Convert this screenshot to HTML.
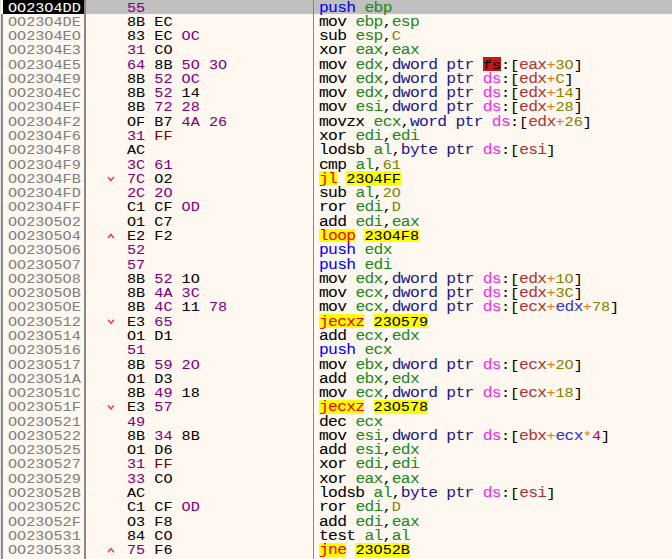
<!DOCTYPE html>
<html><head><meta charset="utf-8"><style>
html,body{margin:0;padding:0;width:672px;height:559px;overflow:hidden;background:#FFF8F0}
.t{position:absolute;white-space:pre;font-family:"Liberation Mono",monospace;font-size:13.0px;line-height:14.280px;transform:scaleX(1.1654);transform-origin:0 0;color:#000;-webkit-text-stroke:0.05px currentColor}
.hl{position:absolute;height:13.8px}
.lc{font-size:14.0px;line-height:0;letter-spacing:-0.600px}
</style></head><body>
<div style="position:absolute;left:0;top:0;width:672px;height:559px;background:#FFF8F0"></div>
<div style="position:absolute;left:2.5px;top:0;width:82px;height:14.28px;background:#000"></div>
<div style="position:absolute;left:86px;top:0;width:586px;height:14.28px;background:#C0C0C0"></div>
<div style="position:absolute;left:0;top:0;width:1.2px;height:559px;background:#E4E4E4"></div>
<div style="position:absolute;left:1.2px;top:14.28px;width:1.4px;height:559px;background:#8C8C8C"></div>
<div style="position:absolute;left:84.2px;top:0;width:1.5px;height:559px;background:#888"></div>
<div style="position:absolute;left:312.8px;top:0;width:1.7px;height:559px;background:#888"></div>
<div class="t" style="left:7.5px;top:1.50px;color:#FFF">OO23O4DD</div>
<div class="t" style="left:126.7px;top:1.50px"><span style="color:#800080">55</span></div>
<div class="t" style="left:319.0px;top:1.50px"><span style="color:#0000FF"><span class="lc">push</span></span> <span style="color:#1F881F"><span class="lc">ebp</span></span></div>
<div class="t" style="left:7.5px;top:15.78px;color:#808080">OO23O4DE</div>
<div class="t" style="left:126.7px;top:15.78px"><span style="color:#000000">8B</span> <span style="color:#000000">EC</span></div>
<div class="t" style="left:319.0px;top:15.78px"><span style="color:#000"><span class="lc">mov</span></span> <span style="color:#1F881F"><span class="lc">ebp</span></span><span style="color:#000">,</span><span style="color:#1F881F"><span class="lc">esp</span></span></div>
<div class="t" style="left:7.5px;top:30.06px;color:#808080">OO23O4EO</div>
<div class="t" style="left:126.7px;top:30.06px"><span style="color:#000000">83</span> <span style="color:#000000">EC</span> <span style="color:#800080">OC</span></div>
<div class="t" style="left:319.0px;top:30.06px"><span style="color:#000"><span class="lc">sub</span></span> <span style="color:#1F881F"><span class="lc">esp</span></span><span style="color:#000">,</span><span style="color:#828200">C</span></div>
<div class="t" style="left:7.5px;top:44.34px;color:#808080">OO23O4E3</div>
<div class="t" style="left:126.7px;top:44.34px"><span style="color:#800080">31</span> <span style="color:#000000">CO</span></div>
<div class="t" style="left:319.0px;top:44.34px"><span style="color:#000"><span class="lc">xor</span></span> <span style="color:#1F881F"><span class="lc">eax</span></span><span style="color:#000">,</span><span style="color:#1F881F"><span class="lc">eax</span></span></div>
<div class="t" style="left:7.5px;top:58.62px;color:#808080">OO23O4E5</div>
<div class="t" style="left:126.7px;top:58.62px"><span style="color:#800080">64</span> <span style="color:#000000">8B</span> <span style="color:#800080">5O</span> <span style="color:#800080">3O</span></div>
<div class="hl" style="left:482.62px;top:57.22px;width:18.18px;background:#C81414"></div>
<div class="t" style="left:319.0px;top:58.62px"><span style="color:#000"><span class="lc">mov</span></span> <span style="color:#1F881F"><span class="lc">edx</span></span><span style="color:#000">,</span><span style="color:#1A1A8C"><span class="lc">dword</span> <span class="lc">ptr</span></span> <span style="color:#000">fs</span><span style="color:#000">:</span><span style="color:#000">[</span><span style="color:#B03434"><span class="lc">eax</span></span><span style="color:#F27711">+</span><span style="color:#828200">3O</span><span style="color:#000">]</span></div>
<div class="t" style="left:7.5px;top:72.90px;color:#808080">OO23O4E9</div>
<div class="t" style="left:126.7px;top:72.90px"><span style="color:#000000">8B</span> <span style="color:#800080">52</span> <span style="color:#800080">OC</span></div>
<div class="t" style="left:319.0px;top:72.90px"><span style="color:#000"><span class="lc">mov</span></span> <span style="color:#1F881F"><span class="lc">edx</span></span><span style="color:#000">,</span><span style="color:#1A1A8C"><span class="lc">dword</span> <span class="lc">ptr</span></span> <span style="color:#F22CF2"><span class="lc">ds</span></span><span style="color:#000">:</span><span style="color:#000">[</span><span style="color:#B03434"><span class="lc">edx</span></span><span style="color:#F27711">+</span><span style="color:#828200">C</span><span style="color:#000">]</span></div>
<div class="t" style="left:7.5px;top:87.18px;color:#808080">OO23O4EC</div>
<div class="t" style="left:126.7px;top:87.18px"><span style="color:#000000">8B</span> <span style="color:#800080">52</span> <span style="color:#000000">14</span></div>
<div class="t" style="left:319.0px;top:87.18px"><span style="color:#000"><span class="lc">mov</span></span> <span style="color:#1F881F"><span class="lc">edx</span></span><span style="color:#000">,</span><span style="color:#1A1A8C"><span class="lc">dword</span> <span class="lc">ptr</span></span> <span style="color:#F22CF2"><span class="lc">ds</span></span><span style="color:#000">:</span><span style="color:#000">[</span><span style="color:#B03434"><span class="lc">edx</span></span><span style="color:#F27711">+</span><span style="color:#828200">14</span><span style="color:#000">]</span></div>
<div class="t" style="left:7.5px;top:101.46px;color:#808080">OO23O4EF</div>
<div class="t" style="left:126.7px;top:101.46px"><span style="color:#000000">8B</span> <span style="color:#800080">72</span> <span style="color:#800080">28</span></div>
<div class="t" style="left:319.0px;top:101.46px"><span style="color:#000"><span class="lc">mov</span></span> <span style="color:#1F881F"><span class="lc">esi</span></span><span style="color:#000">,</span><span style="color:#1A1A8C"><span class="lc">dword</span> <span class="lc">ptr</span></span> <span style="color:#F22CF2"><span class="lc">ds</span></span><span style="color:#000">:</span><span style="color:#000">[</span><span style="color:#B03434"><span class="lc">edx</span></span><span style="color:#F27711">+</span><span style="color:#828200">28</span><span style="color:#000">]</span></div>
<div class="t" style="left:7.5px;top:115.74px;color:#808080">OO23O4F2</div>
<div class="t" style="left:126.7px;top:115.74px"><span style="color:#000000">OF</span> <span style="color:#000000">B7</span> <span style="color:#800080">4A</span> <span style="color:#800080">26</span></div>
<div class="t" style="left:319.0px;top:115.74px"><span style="color:#000"><span class="lc">movzx</span></span> <span style="color:#1F881F"><span class="lc">ecx</span></span><span style="color:#000">,</span><span style="color:#1A1A8C"><span class="lc">word</span> <span class="lc">ptr</span></span> <span style="color:#F22CF2"><span class="lc">ds</span></span><span style="color:#000">:</span><span style="color:#000">[</span><span style="color:#B03434"><span class="lc">edx</span></span><span style="color:#F27711">+</span><span style="color:#828200">26</span><span style="color:#000">]</span></div>
<div class="t" style="left:7.5px;top:130.02px;color:#808080">OO23O4F6</div>
<div class="t" style="left:126.7px;top:130.02px"><span style="color:#800080">31</span> <span style="color:#800000">FF</span></div>
<div class="t" style="left:319.0px;top:130.02px"><span style="color:#000"><span class="lc">xor</span></span> <span style="color:#1F881F"><span class="lc">edi</span></span><span style="color:#000">,</span><span style="color:#1F881F"><span class="lc">edi</span></span></div>
<div class="t" style="left:7.5px;top:144.30px;color:#808080">OO23O4F8</div>
<div class="t" style="left:126.7px;top:144.30px"><span style="color:#000000">AC</span></div>
<div class="t" style="left:319.0px;top:144.30px"><span style="color:#000"><span class="lc">lodsb</span></span> <span style="color:#1F881F"><span class="lc">al</span></span><span style="color:#000">,</span><span style="color:#1A1A8C"><span class="lc">byte</span> <span class="lc">ptr</span></span> <span style="color:#F22CF2"><span class="lc">ds</span></span><span style="color:#000">:</span><span style="color:#000">[</span><span style="color:#B03434"><span class="lc">esi</span></span><span style="color:#000">]</span></div>
<div class="t" style="left:7.5px;top:158.58px;color:#808080">OO23O4F9</div>
<div class="t" style="left:126.7px;top:158.58px"><span style="color:#800080">3C</span> <span style="color:#800080">61</span></div>
<div class="t" style="left:319.0px;top:158.58px"><span style="color:#000"><span class="lc">cmp</span></span> <span style="color:#1F881F"><span class="lc">al</span></span><span style="color:#000">,</span><span style="color:#828200">61</span></div>
<div class="t" style="left:7.5px;top:172.86px;color:#808080">OO23O4FB</div>
<svg style="position:absolute;left:0;top:0" width="672" height="559"><polyline points="108,176.90 110.9,180.50 113.8,176.90" fill="none" stroke="#F03C3C" stroke-width="1.5"/></svg>
<div class="t" style="left:126.7px;top:172.86px"><span style="color:#800080">7C</span> <span style="color:#000000">O2</span></div>
<div class="hl" style="left:319.00px;top:171.46px;width:18.18px;background:#FFFF00"></div>
<div class="hl" style="left:346.27px;top:171.46px;width:54.54px;background:#FFFF00"></div>
<div class="t" style="left:319.0px;top:172.86px"><span style="color:#FF0000"><span class="lc">jl</span></span> <span style="color:#000">23O4FF</span></div>
<div class="t" style="left:7.5px;top:187.14px;color:#808080">OO23O4FD</div>
<div class="t" style="left:126.7px;top:187.14px"><span style="color:#800080">2C</span> <span style="color:#800080">2O</span></div>
<div class="t" style="left:319.0px;top:187.14px"><span style="color:#000"><span class="lc">sub</span></span> <span style="color:#1F881F"><span class="lc">al</span></span><span style="color:#000">,</span><span style="color:#828200">2O</span></div>
<div class="t" style="left:7.5px;top:201.42px;color:#808080">OO23O4FF</div>
<div class="t" style="left:126.7px;top:201.42px"><span style="color:#000000">C1</span> <span style="color:#000000">CF</span> <span style="color:#800080">OD</span></div>
<div class="t" style="left:319.0px;top:201.42px"><span style="color:#000"><span class="lc">ror</span></span> <span style="color:#1F881F"><span class="lc">edi</span></span><span style="color:#000">,</span><span style="color:#828200">D</span></div>
<div class="t" style="left:7.5px;top:215.70px;color:#808080">OO23O5O2</div>
<div class="t" style="left:126.7px;top:215.70px"><span style="color:#000000">O1</span> <span style="color:#000000">C7</span></div>
<div class="t" style="left:319.0px;top:215.70px"><span style="color:#000"><span class="lc">add</span></span> <span style="color:#1F881F"><span class="lc">edi</span></span><span style="color:#000">,</span><span style="color:#1F881F"><span class="lc">eax</span></span></div>
<div class="t" style="left:7.5px;top:229.98px;color:#808080">OO23O5O4</div>
<svg style="position:absolute;left:0;top:0" width="672" height="559"><polyline points="108,238.02 110.9,234.42 113.8,238.02" fill="none" stroke="#F03C3C" stroke-width="1.5"/></svg>
<div class="t" style="left:126.7px;top:229.98px"><span style="color:#000000">E2</span> <span style="color:#000000">F2</span></div>
<div class="hl" style="left:319.00px;top:228.58px;width:36.36px;background:#FFFF00"></div>
<div class="hl" style="left:364.45px;top:228.58px;width:54.54px;background:#FFFF00"></div>
<div class="t" style="left:319.0px;top:229.98px"><span style="color:#FF0000"><span class="lc">loop</span></span> <span style="color:#000">23O4F8</span></div>
<div class="t" style="left:7.5px;top:244.26px;color:#808080">OO23O5O6</div>
<div class="t" style="left:126.7px;top:244.26px"><span style="color:#800080">52</span></div>
<div class="t" style="left:319.0px;top:244.26px"><span style="color:#0000FF"><span class="lc">push</span></span> <span style="color:#1F881F"><span class="lc">edx</span></span></div>
<div class="t" style="left:7.5px;top:258.54px;color:#808080">OO23O5O7</div>
<div class="t" style="left:126.7px;top:258.54px"><span style="color:#800080">57</span></div>
<div class="t" style="left:319.0px;top:258.54px"><span style="color:#0000FF"><span class="lc">push</span></span> <span style="color:#1F881F"><span class="lc">edi</span></span></div>
<div class="t" style="left:7.5px;top:272.82px;color:#808080">OO23O5O8</div>
<div class="t" style="left:126.7px;top:272.82px"><span style="color:#000000">8B</span> <span style="color:#800080">52</span> <span style="color:#000000">1O</span></div>
<div class="t" style="left:319.0px;top:272.82px"><span style="color:#000"><span class="lc">mov</span></span> <span style="color:#1F881F"><span class="lc">edx</span></span><span style="color:#000">,</span><span style="color:#1A1A8C"><span class="lc">dword</span> <span class="lc">ptr</span></span> <span style="color:#F22CF2"><span class="lc">ds</span></span><span style="color:#000">:</span><span style="color:#000">[</span><span style="color:#B03434"><span class="lc">edx</span></span><span style="color:#F27711">+</span><span style="color:#828200">1O</span><span style="color:#000">]</span></div>
<div class="t" style="left:7.5px;top:287.10px;color:#808080">OO23O5OB</div>
<div class="t" style="left:126.7px;top:287.10px"><span style="color:#000000">8B</span> <span style="color:#800080">4A</span> <span style="color:#800080">3C</span></div>
<div class="t" style="left:319.0px;top:287.10px"><span style="color:#000"><span class="lc">mov</span></span> <span style="color:#1F881F"><span class="lc">ecx</span></span><span style="color:#000">,</span><span style="color:#1A1A8C"><span class="lc">dword</span> <span class="lc">ptr</span></span> <span style="color:#F22CF2"><span class="lc">ds</span></span><span style="color:#000">:</span><span style="color:#000">[</span><span style="color:#B03434"><span class="lc">edx</span></span><span style="color:#F27711">+</span><span style="color:#828200">3C</span><span style="color:#000">]</span></div>
<div class="t" style="left:7.5px;top:301.38px;color:#808080">OO23O5OE</div>
<div class="t" style="left:126.7px;top:301.38px"><span style="color:#000000">8B</span> <span style="color:#800080">4C</span> <span style="color:#000000">11</span> <span style="color:#800080">78</span></div>
<div class="t" style="left:319.0px;top:301.38px"><span style="color:#000"><span class="lc">mov</span></span> <span style="color:#1F881F"><span class="lc">ecx</span></span><span style="color:#000">,</span><span style="color:#1A1A8C"><span class="lc">dword</span> <span class="lc">ptr</span></span> <span style="color:#F22CF2"><span class="lc">ds</span></span><span style="color:#000">:</span><span style="color:#000">[</span><span style="color:#B03434"><span class="lc">ecx</span></span><span style="color:#F27711">+</span><span style="color:#3838BC"><span class="lc">edx</span></span><span style="color:#F27711">+</span><span style="color:#828200">78</span><span style="color:#000">]</span></div>
<div class="t" style="left:7.5px;top:315.66px;color:#808080">OO23O512</div>
<svg style="position:absolute;left:0;top:0" width="672" height="559"><polyline points="108,319.70 110.9,323.30 113.8,319.70" fill="none" stroke="#F03C3C" stroke-width="1.5"/></svg>
<div class="t" style="left:126.7px;top:315.66px"><span style="color:#000000">E3</span> <span style="color:#800080">65</span></div>
<div class="hl" style="left:319.00px;top:314.26px;width:45.45px;background:#FFFF00"></div>
<div class="hl" style="left:373.54px;top:314.26px;width:54.54px;background:#FFFF00"></div>
<div class="t" style="left:319.0px;top:315.66px"><span style="color:#FF0000"><span class="lc">jecxz</span></span> <span style="color:#000">23O579</span></div>
<div class="t" style="left:7.5px;top:329.94px;color:#808080">OO23O514</div>
<div class="t" style="left:126.7px;top:329.94px"><span style="color:#000000">O1</span> <span style="color:#000000">D1</span></div>
<div class="t" style="left:319.0px;top:329.94px"><span style="color:#000"><span class="lc">add</span></span> <span style="color:#1F881F"><span class="lc">ecx</span></span><span style="color:#000">,</span><span style="color:#1F881F"><span class="lc">edx</span></span></div>
<div class="t" style="left:7.5px;top:344.22px;color:#808080">OO23O516</div>
<div class="t" style="left:126.7px;top:344.22px"><span style="color:#800080">51</span></div>
<div class="t" style="left:319.0px;top:344.22px"><span style="color:#0000FF"><span class="lc">push</span></span> <span style="color:#1F881F"><span class="lc">ecx</span></span></div>
<div class="t" style="left:7.5px;top:358.50px;color:#808080">OO23O517</div>
<div class="t" style="left:126.7px;top:358.50px"><span style="color:#000000">8B</span> <span style="color:#800080">59</span> <span style="color:#800080">2O</span></div>
<div class="t" style="left:319.0px;top:358.50px"><span style="color:#000"><span class="lc">mov</span></span> <span style="color:#1F881F"><span class="lc">ebx</span></span><span style="color:#000">,</span><span style="color:#1A1A8C"><span class="lc">dword</span> <span class="lc">ptr</span></span> <span style="color:#F22CF2"><span class="lc">ds</span></span><span style="color:#000">:</span><span style="color:#000">[</span><span style="color:#B03434"><span class="lc">ecx</span></span><span style="color:#F27711">+</span><span style="color:#828200">2O</span><span style="color:#000">]</span></div>
<div class="t" style="left:7.5px;top:372.78px;color:#808080">OO23O51A</div>
<div class="t" style="left:126.7px;top:372.78px"><span style="color:#000000">O1</span> <span style="color:#000000">D3</span></div>
<div class="t" style="left:319.0px;top:372.78px"><span style="color:#000"><span class="lc">add</span></span> <span style="color:#1F881F"><span class="lc">ebx</span></span><span style="color:#000">,</span><span style="color:#1F881F"><span class="lc">edx</span></span></div>
<div class="t" style="left:7.5px;top:387.06px;color:#808080">OO23O51C</div>
<div class="t" style="left:126.7px;top:387.06px"><span style="color:#000000">8B</span> <span style="color:#800080">49</span> <span style="color:#000000">18</span></div>
<div class="t" style="left:319.0px;top:387.06px"><span style="color:#000"><span class="lc">mov</span></span> <span style="color:#1F881F"><span class="lc">ecx</span></span><span style="color:#000">,</span><span style="color:#1A1A8C"><span class="lc">dword</span> <span class="lc">ptr</span></span> <span style="color:#F22CF2"><span class="lc">ds</span></span><span style="color:#000">:</span><span style="color:#000">[</span><span style="color:#B03434"><span class="lc">ecx</span></span><span style="color:#F27711">+</span><span style="color:#828200">18</span><span style="color:#000">]</span></div>
<div class="t" style="left:7.5px;top:401.34px;color:#808080">OO23O51F</div>
<svg style="position:absolute;left:0;top:0" width="672" height="559"><polyline points="108,405.38 110.9,408.98 113.8,405.38" fill="none" stroke="#F03C3C" stroke-width="1.5"/></svg>
<div class="t" style="left:126.7px;top:401.34px"><span style="color:#000000">E3</span> <span style="color:#800080">57</span></div>
<div class="hl" style="left:319.00px;top:399.94px;width:45.45px;background:#FFFF00"></div>
<div class="hl" style="left:373.54px;top:399.94px;width:54.54px;background:#FFFF00"></div>
<div class="t" style="left:319.0px;top:401.34px"><span style="color:#FF0000"><span class="lc">jecxz</span></span> <span style="color:#000">23O578</span></div>
<div class="t" style="left:7.5px;top:415.62px;color:#808080">OO23O521</div>
<div class="t" style="left:126.7px;top:415.62px"><span style="color:#800080">49</span></div>
<div class="t" style="left:319.0px;top:415.62px"><span style="color:#000"><span class="lc">dec</span></span> <span style="color:#1F881F"><span class="lc">ecx</span></span></div>
<div class="t" style="left:7.5px;top:429.90px;color:#808080">OO23O522</div>
<div class="t" style="left:126.7px;top:429.90px"><span style="color:#000000">8B</span> <span style="color:#800080">34</span> <span style="color:#000000">8B</span></div>
<div class="t" style="left:319.0px;top:429.90px"><span style="color:#000"><span class="lc">mov</span></span> <span style="color:#1F881F"><span class="lc">esi</span></span><span style="color:#000">,</span><span style="color:#1A1A8C"><span class="lc">dword</span> <span class="lc">ptr</span></span> <span style="color:#F22CF2"><span class="lc">ds</span></span><span style="color:#000">:</span><span style="color:#000">[</span><span style="color:#B03434"><span class="lc">ebx</span></span><span style="color:#F27711">+</span><span style="color:#3838BC"><span class="lc">ecx</span></span><span style="color:#F27711">*</span><span style="color:#B30059">4</span><span style="color:#000">]</span></div>
<div class="t" style="left:7.5px;top:444.18px;color:#808080">OO23O525</div>
<div class="t" style="left:126.7px;top:444.18px"><span style="color:#000000">O1</span> <span style="color:#000000">D6</span></div>
<div class="t" style="left:319.0px;top:444.18px"><span style="color:#000"><span class="lc">add</span></span> <span style="color:#1F881F"><span class="lc">esi</span></span><span style="color:#000">,</span><span style="color:#1F881F"><span class="lc">edx</span></span></div>
<div class="t" style="left:7.5px;top:458.46px;color:#808080">OO23O527</div>
<div class="t" style="left:126.7px;top:458.46px"><span style="color:#800080">31</span> <span style="color:#800000">FF</span></div>
<div class="t" style="left:319.0px;top:458.46px"><span style="color:#000"><span class="lc">xor</span></span> <span style="color:#1F881F"><span class="lc">edi</span></span><span style="color:#000">,</span><span style="color:#1F881F"><span class="lc">edi</span></span></div>
<div class="t" style="left:7.5px;top:472.74px;color:#808080">OO23O529</div>
<div class="t" style="left:126.7px;top:472.74px"><span style="color:#800080">33</span> <span style="color:#000000">CO</span></div>
<div class="t" style="left:319.0px;top:472.74px"><span style="color:#000"><span class="lc">xor</span></span> <span style="color:#1F881F"><span class="lc">eax</span></span><span style="color:#000">,</span><span style="color:#1F881F"><span class="lc">eax</span></span></div>
<div class="t" style="left:7.5px;top:487.02px;color:#808080">OO23O52B</div>
<div class="t" style="left:126.7px;top:487.02px"><span style="color:#000000">AC</span></div>
<div class="t" style="left:319.0px;top:487.02px"><span style="color:#000"><span class="lc">lodsb</span></span> <span style="color:#1F881F"><span class="lc">al</span></span><span style="color:#000">,</span><span style="color:#1A1A8C"><span class="lc">byte</span> <span class="lc">ptr</span></span> <span style="color:#F22CF2"><span class="lc">ds</span></span><span style="color:#000">:</span><span style="color:#000">[</span><span style="color:#B03434"><span class="lc">esi</span></span><span style="color:#000">]</span></div>
<div class="t" style="left:7.5px;top:501.30px;color:#808080">OO23O52C</div>
<div class="t" style="left:126.7px;top:501.30px"><span style="color:#000000">C1</span> <span style="color:#000000">CF</span> <span style="color:#800080">OD</span></div>
<div class="t" style="left:319.0px;top:501.30px"><span style="color:#000"><span class="lc">ror</span></span> <span style="color:#1F881F"><span class="lc">edi</span></span><span style="color:#000">,</span><span style="color:#828200">D</span></div>
<div class="t" style="left:7.5px;top:515.58px;color:#808080">OO23O52F</div>
<div class="t" style="left:126.7px;top:515.58px"><span style="color:#000000">O3</span> <span style="color:#000000">F8</span></div>
<div class="t" style="left:319.0px;top:515.58px"><span style="color:#000"><span class="lc">add</span></span> <span style="color:#1F881F"><span class="lc">edi</span></span><span style="color:#000">,</span><span style="color:#1F881F"><span class="lc">eax</span></span></div>
<div class="t" style="left:7.5px;top:529.86px;color:#808080">OO23O531</div>
<div class="t" style="left:126.7px;top:529.86px"><span style="color:#000000">84</span> <span style="color:#000000">CO</span></div>
<div class="t" style="left:319.0px;top:529.86px"><span style="color:#000"><span class="lc">test</span></span> <span style="color:#1F881F"><span class="lc">al</span></span><span style="color:#000">,</span><span style="color:#1F881F"><span class="lc">al</span></span></div>
<div class="t" style="left:7.5px;top:544.14px;color:#808080">OO23O533</div>
<svg style="position:absolute;left:0;top:0" width="672" height="559"><polyline points="108,552.18 110.9,548.58 113.8,552.18" fill="none" stroke="#F03C3C" stroke-width="1.5"/></svg>
<div class="t" style="left:126.7px;top:544.14px"><span style="color:#800080">75</span> <span style="color:#000000">F6</span></div>
<div class="hl" style="left:319.00px;top:542.74px;width:27.27px;background:#FFFF00"></div>
<div class="hl" style="left:355.36px;top:542.74px;width:54.54px;background:#FFFF00"></div>
<div class="t" style="left:319.0px;top:544.14px"><span style="color:#FF0000"><span class="lc">jne</span></span> <span style="color:#000">23O52B</span></div>
</body></html>
